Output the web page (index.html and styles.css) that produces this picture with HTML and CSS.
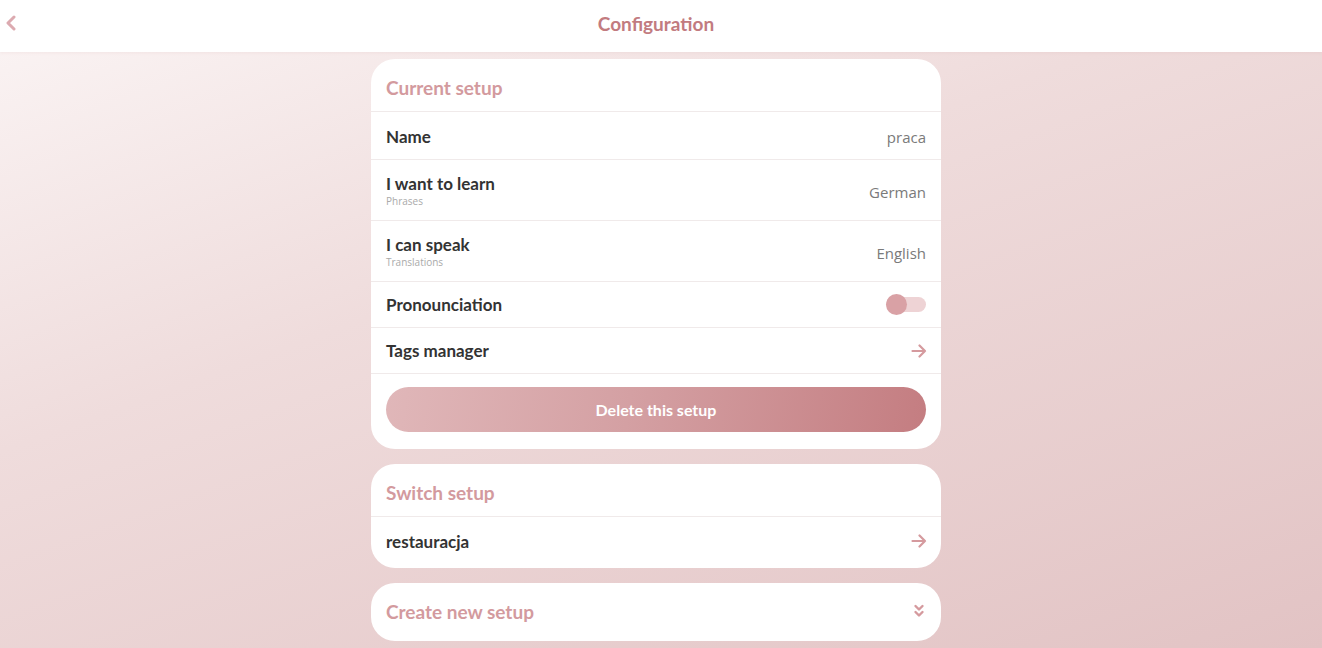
FILE: index.html
```html
<!DOCTYPE html>
<html>
<head>
<meta charset="utf-8">
<link rel="stylesheet" href="styles.css">
</head>
<body>
<header class="topbar">
  <button class="back" aria-label="Back">
    <svg width="12" height="16" viewBox="0 0 12 16"><path d="M9 2 L3 8 L9 14" fill="none" stroke="#dcaab0" stroke-width="3" stroke-linecap="round" stroke-linejoin="round"/></svg>
  </button>
  <h1 class="title">Configuration</h1>
</header>
<main class="content">
  <section class="card">
    <h2 class="card-title">Current setup</h2>
    <div class="row row-short">
      <span class="label">Name</span>
      <span class="value">praca</span>
    </div>
    <div class="row row-tall">
      <div class="label-wrap"><span class="label">I want to learn</span><span class="sub">Phrases</span></div>
      <span class="value value-low">German</span>
    </div>
    <div class="row row-tall">
      <div class="label-wrap"><span class="label">I can speak</span><span class="sub">Translations</span></div>
      <span class="value value-low">English</span>
    </div>
    <div class="row row-mid">
      <span class="label">Pronounciation</span>
      <span class="toggle"><span class="knob"></span></span>
    </div>
    <div class="row row-mid">
      <span class="label">Tags manager</span>
      <svg class="arrow" width="16" height="14" viewBox="0 0 16 14"><path d="M1.5 7 H14 M8.5 1.5 L14 7 L8.5 12.5" fill="none" stroke="#d59a9e" stroke-width="2.2" stroke-linecap="round" stroke-linejoin="round"/></svg>
    </div>
    <div class="actions">
      <button class="danger">Delete this setup</button>
    </div>
  </section>
  <section class="card">
    <h2 class="card-title">Switch setup</h2>
    <div class="row row-switch">
      <span class="label">restauracja</span>
      <svg class="arrow" width="16" height="14" viewBox="0 0 16 14"><path d="M1.5 7 H14 M8.5 1.5 L14 7 L8.5 12.5" fill="none" stroke="#d59a9e" stroke-width="2.2" stroke-linecap="round" stroke-linejoin="round"/></svg>
    </div>
  </section>
  <section class="card">
    <div class="card-title collapsed">
      <span>Create new setup</span>
      <svg width="12" height="14" viewBox="0 0 12 14"><path d="M2.5 2 L6 5.5 L9.5 2 M2.5 8 L6 11.5 L9.5 8" fill="none" stroke="#d59a9e" stroke-width="2.4" stroke-linecap="round" stroke-linejoin="round"/></svg>
    </div>
  </section>
</main>
</body>
</html>
```
FILE: styles.css
```css
* { box-sizing: border-box; }
html {
  margin: 0;
  padding: 0;
  height: 648px;
  overflow: hidden;
  background: linear-gradient(160deg, #fbf5f5 0%, #efdcdc 40%, #e2c3c4 100%);
}
body {
  margin: 0;
  padding: 0 10px 0 0;
  height: 648px;
  font-family: "Lato", "Liberation Sans", sans-serif;
}
.topbar {
  height: 52px;
  margin-right: -10px;
  padding-right: 10px;
  background: #fff;
  display: flex;
  align-items: center;
  justify-content: center;
  position: relative;
  box-shadow: 0 1px 3px rgba(200,150,150,0.12);
}
.back {
  position: absolute;
  left: 4px;
  top: 14px;
  border: 0;
  background: none;
  padding: 0;
  width: 14px;
  height: 18px;
  display: flex;
  align-items: center;
  justify-content: center;
}
.title {
  margin: 0;
  font-size: 19px;
  font-weight: 700;
  color: #c27b80;
  padding-bottom: 6px;
}
.content {
  width: 570px;
  margin: 7px auto 0;
  display: flex;
  flex-direction: column;
  gap: 15px;
}
.card {
  background: #fff;
  border-radius: 24px;
  overflow: hidden;
}
.card-title {
  margin: 0;
  height: 53px;
  padding: 5px 15px 0;
  display: flex;
  align-items: center;
  font-size: 19px;
  font-weight: 700;
  color: #d39a9e;
  border-bottom: 1px solid #f0eaea;
}
.card-title.collapsed {
  height: 58px;
  padding-top: 0;
  padding-bottom: 2px;
  border-bottom: 0;
  justify-content: space-between;
  padding-right: 16px;
}
.row {
  display: flex;
  align-items: center;
  justify-content: space-between;
  padding: 0 15px;
  border-bottom: 1px solid #f0eaea;
}
.row-short { height: 48px; padding-top: 2px; }
.row-tall { height: 61px; }
.row-mid { height: 46px; }
.row-switch { height: 51px; border-bottom: 0; padding-bottom: 3px; }
.label {
  font-size: 17px;
  font-weight: 700;
  color: #333;
}
.label-wrap {
  display: flex;
  flex-direction: column;
}
.sub {
  font-family: "Open Sans", "Liberation Sans", sans-serif;
  font-size: 10px;
  color: #aaa;
  line-height: 14px;
}
.value {
  font-family: "Open Sans", "Liberation Sans", sans-serif;
  font-size: 15px;
  color: #7a7a7a;
  font-weight: 400;
}
.value-low { padding-top: 4px; }
.toggle {
  width: 40px;
  height: 15px;
  border-radius: 8px;
  background: #eed3d5;
  position: relative;
}
.knob {
  position: absolute;
  left: 0;
  top: -3px;
  width: 21px;
  height: 21px;
  border-radius: 50%;
  background: #d9a1a5;
}
.arrow { margin-right: -1px; }
.actions {
  padding: 13px 15px 17px;
}
.danger {
  width: 100%;
  height: 45px;
  border: 0;
  border-radius: 23px;
  background: linear-gradient(100deg, #e0b7b9 0%, #d4a0a3 45%, #c47d81 100%);
  color: #fff;
  font-family: "Lato", "Liberation Sans", sans-serif;
  font-size: 16px;
  font-weight: 700;
}
```
